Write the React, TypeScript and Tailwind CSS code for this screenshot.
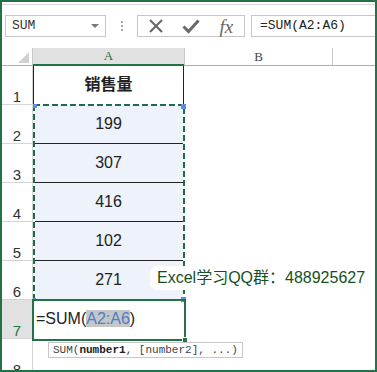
import React from "react";

const sans = { fontFamily: '"Liberation Sans", "Noto Sans CJK SC", sans-serif' };
const mono = { fontFamily: '"Liberation Mono", monospace' };
const serif = { fontFamily: '"Liberation Serif", serif' };

const rows = [
  { n: 1, v: "销售量", head: true },
  { n: 2, v: "199" },
  { n: 3, v: "307" },
  { n: 4, v: "416" },
  { n: 5, v: "102" },
  { n: 6, v: "271" },
  { n: 7, v: "", active: true },
  { n: 8, v: "", empty: true },
];

function Toolbar() {
  return (
    <div className="h-[46px] pt-[2px]">
      <div className="h-px bg-[#d6d6d6]" />
      <div className="mt-[10px] flex h-[22px] items-stretch">
        {/* Name box */}
        <div className="ml-[3px] flex w-[101px] items-center justify-between border border-[#c6c6c6] pl-[6px] pr-[6px]">
          <span className="text-[13px] text-[#333]" style={mono}>SUM</span>
          <span className="h-0 w-0 border-x-[4px] border-t-[4px] border-x-transparent border-t-[#777]" />
        </div>
        <div className="flex w-[31px] flex-col items-center justify-center gap-[2px]">
          <span className="h-[2px] w-[2px] bg-[#a8a8a8]" />
          <span className="h-[2px] w-[2px] bg-[#a8a8a8]" />
          <span className="h-[2px] w-[2px] bg-[#a8a8a8]" />
        </div>
        {/* Cancel / enter / fx */}
        <div className="flex w-[108px] items-center border border-[#c6c6c6]">
          <div className="flex w-[36px] justify-center">
            <svg width="16" height="16" viewBox="0 0 16 16">
              <path d="M2 2 L14 14 M14 2 L2 14" stroke="#6a6a6a" strokeWidth="2.2" />
            </svg>
          </div>
          <div className="flex w-[36px] justify-center">
            <svg width="18" height="16" viewBox="0 0 18 16">
              <path d="M1.5 8.5 L6.5 13.5 L16.5 2.5" stroke="#6a6a6a" strokeWidth="3" fill="none" />
            </svg>
          </div>
          <div className="flex w-[36px] justify-center">
            <span className="text-[19px] italic leading-none text-[#666]" style={serif}>fx</span>
          </div>
        </div>
        <div className="ml-[6px] flex flex-1 items-center border border-r-0 border-[#c6c6c6] pl-[8px]">
          <span className="text-[13px] text-[#222]" style={mono}>=SUM(A2:A6)</span>
        </div>
      </div>
    </div>
  );
}

function ColumnHeader() {
  return (
    <div className="flex h-[18px] border-b border-[#b0b0b0]">
      <div className="relative w-[31px] border-r border-[#c8c8c8]">
        <svg className="absolute right-[3px] bottom-[2px]" width="11" height="11" viewBox="0 0 11 11">
          <path d="M11 0 L11 11 L0 11 Z" fill="#d2d2d2" />
        </svg>
      </div>
      <div className="-mb-px flex w-[151px] items-center justify-center border-b-2 border-[#217346] bg-[#e1e1e1] pb-[1px]">
        <span className="text-[13px] text-[#217346]" style={serif}>A</span>
      </div>
      <div className="flex w-[149px] items-center justify-center border-l border-r border-[#c8c8c8]">
        <span className="text-[13px] text-[#444]" style={serif}>B</span>
      </div>
      <div className="flex-1" />
    </div>
  );
}

export default function App() {
  return (
    <div className="relative h-[372px] w-[377px] overflow-hidden border-2 border-[#217346] bg-white" style={sans}>
      <Toolbar />
      <ColumnHeader />

      {rows.map((r) => (
        <div key={r.n} className="flex h-[39px] shrink-0">
          <div
            className={`flex w-[31px] items-end justify-center border-r border-b border-[#d4d4d4] text-[15px] leading-none ${
              r.active ? "bg-[#e1e1e1] text-[#217346]" : "text-[#333]"
            }`}
          >
            {r.n}
          </div>
          <div
            className={`flex w-[151px] items-center justify-center text-[16px] text-[#222] ${
              r.head ? "border-l border-r border-b border-[#222] font-bold" : ""
            } ${!r.head && !r.active && !r.empty ? "border-b border-[#222] bg-[#edf2fb]" : ""}`}
          >
            {r.active ? (
              <span className="w-full pl-[3px] pb-[2px] text-left">
                =SUM(<span className="bg-[#c6c6c6] text-[#4a7ec6]">A2:A6</span>)
              </span>
            ) : (
              r.v
            )}
          </div>
          <div className="flex-1" />
        </div>
      ))}

      {/* copy marquee around A2:A6 */}
      <svg className="absolute left-[31px] top-[102px]" width="153" height="198" viewBox="0 0 153 198">
        <rect x="1" y="1" width="150" height="195" fill="none" stroke="#fff" strokeWidth="2" />
        <rect x="1" y="1" width="150" height="195" fill="none" stroke="#1f6b45" strokeWidth="2" strokeDasharray="6 3" />
        <rect x="0" y="0" width="4" height="4" fill="#5b8ee6" />
        <rect x="148" y="0" width="5" height="5" fill="#5b8ee6" />
        <rect x="148" y="193" width="5" height="5" fill="#5b8ee6" />
        <rect x="0" y="194" width="3" height="3" fill="#5b8ee6" />
      </svg>

      {/* active cell A7 */}
      <div className="absolute left-[30px] top-[297px] h-[42px] w-[154px] border-2 border-[#217346]">
        <span className="absolute -right-[4px] -bottom-[4px] h-[6px] w-[6px] border border-white bg-[#217346]" />
      </div>

      {/* watermark */}
      <div className="absolute left-[148px] top-[264px] flex h-[24px] w-[230px] items-center rounded-[7px] bg-white pl-[7px]">
        <span className="text-[16px] leading-none text-[#17501f]">Excel学习QQ群：488925627</span>
      </div>

      {/* function tooltip */}
      <div className="absolute left-[46px] top-[340px] flex h-[16px] items-center border border-[#c6c6c6] bg-white px-[4px]">
        <span className="text-[11px] leading-none text-[#444]" style={mono}>
          SUM(<b className="text-[#222]">number1</b>, [number2], ...)
        </span>
      </div>
    </div>
  );
}
